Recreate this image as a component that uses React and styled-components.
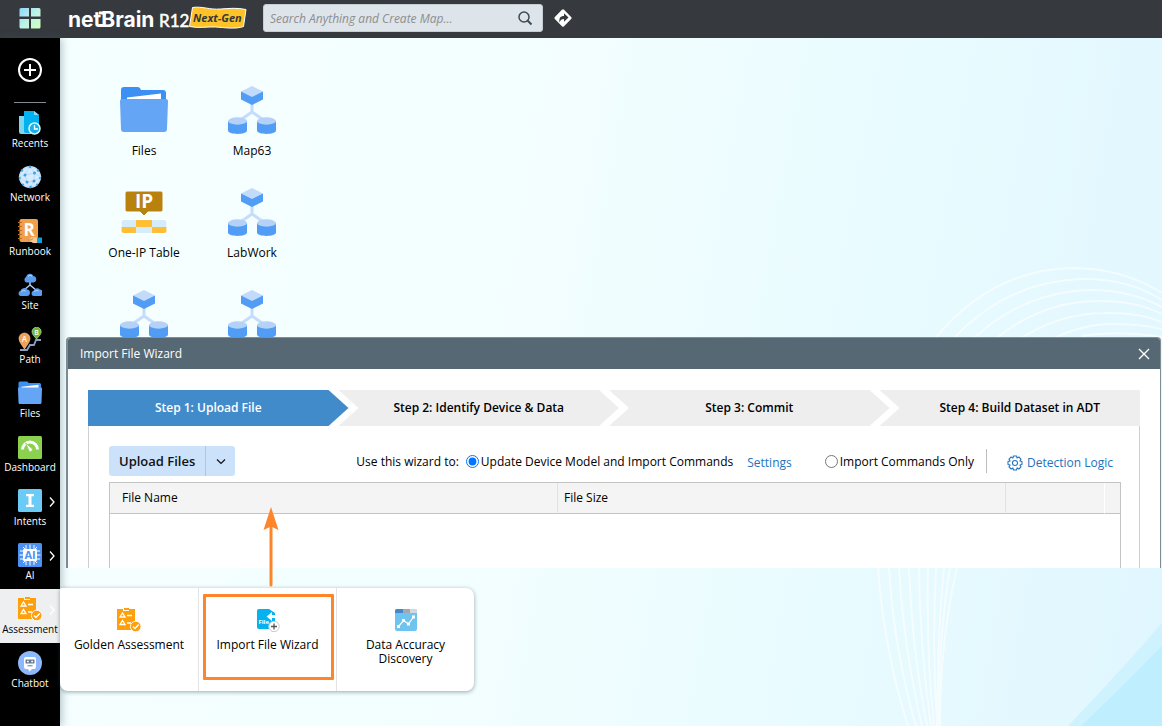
import { useState } from 'react';
import styled, { createGlobalStyle, css } from 'styled-components';

const GlobalStyle = createGlobalStyle`
  * {
    box-sizing: border-box;
  }

  body {
    margin: 0;
    font-family: 'Open Sans', 'Noto Sans', sans-serif;
    font-size: 12px;
    color: #000;
  }

  button, input {
    font-family: inherit;
    font-size: inherit;
  }
`;

const Page = styled.div`
  display: flex;
  flex-direction: column;
  min-height: 100vh;
`;

const TopBar = styled.header`
  display: flex;
  align-items: center;
  height: 38px;
  padding-bottom: 2px;
  background: #363a3f;
`;

const IconButton = styled.button`
  display: flex;
  align-items: center;
  justify-content: center;
  padding: 0;
  border: none;
  background: none;
  color: inherit;
  cursor: pointer;
`;

const AppsButton = styled(IconButton)`
  width: 60px;
`;

const Brand = styled.a`
  display: flex;
  align-items: center;
  margin: 0 16px 0 8px;
`;

const SearchBox = styled.form`
  display: flex;
  align-items: center;
  width: 280px;
  height: 28px;
  margin-right: 10px;
  border: 1px solid #c5ccd2;
  border-radius: 3px;
  background: #dde4ea;
  color: #3b4b57;
`;

const SearchInput = styled.input`
  flex: 1;
  min-width: 0;
  padding: 0 6px;
  border: none;
  outline: none;
  background: none;
  font-style: italic;

  &::placeholder {
    color: #8e8e8e;
  }
`;

const SearchButton = styled(IconButton)`
  width: 34px;
`;

const Main = styled.div`
  display: flex;
  flex: 1;
`;

const Sidebar = styled.nav`
  position: relative;
  z-index: 3;
  display: flex;
  flex-direction: column;
  flex: none;
  width: 60px;
  background: #000;
  color: #fff;
  box-shadow: 2px 0 8px rgba(60, 90, 100, 0.35);
`;

const AddButton = styled(IconButton)`
  height: 64px;
`;

const Separator = styled.hr`
  width: 32px;
  height: 1px;
  margin: 0 auto;
  border: none;
  background: #858a8e;
`;

const NavItem = styled.div`
  position: relative;
  height: 54px;
  ${(props) => props.$active && css`
    background: #eeeff1;
    color: #000;
  `}
`;

const NavButton = styled.button`
  display: flex;
  flex-direction: column;
  align-items: center;
  gap: 1px;
  width: 100%;
  height: 100%;
  padding: 8px 0 0;
  border: none;
  background: none;
  color: inherit;
  font-size: 10px;
  font-weight: 500;
  line-height: 14px;
  cursor: pointer;
`;

const NavArrow = styled.svg`
  position: absolute;
  top: 15px;
  right: 4px;
`;

const Flyout = styled.div`
  position: absolute;
  top: -1px;
  left: 60px;
  display: flex;
  border-radius: 2px 8px 8px 8px;
  background: #fff;
  color: #000;
  box-shadow: 0 1px 4px rgba(30, 60, 70, 0.45);
`;

const FlyoutCell = styled.div`
  position: relative;
  width: 138px;

  & + & {
    border-left: 1px solid #e3e3e3;
  }
`;

const FlyoutButton = styled.button`
  display: flex;
  flex-direction: column;
  align-items: center;
  gap: 6px;
  width: 100%;
  min-height: 103px;
  padding: 20px 12px 0;
  border: none;
  background: none;
  color: #000;
  line-height: 14px;
  cursor: pointer;
`;

const Highlight = styled.div`
  position: absolute;
  inset: 6px 2px 11px 4px;
  border: 3px solid #ff852b;
  border-radius: 1px;
  pointer-events: none;
`;

const HighlightArrow = styled.svg`
  position: absolute;
  bottom: 104px;
  left: 64px;
  pointer-events: none;
`;

const Desktop = styled.main`
  position: relative;
  flex: 1;
  min-width: 0;
  overflow: hidden;
  background: linear-gradient(100deg, #f5ffff 0%, #f3feff 40%, #e8fbff 72%, #e0f6fe 100%);
`;

const Backdrop = styled.svg`
  position: absolute;
  right: 0;
  bottom: 0;
  width: 302px;
  height: 476px;
`;

const Shortcuts = styled.div`
  display: grid;
  grid-template-columns: repeat(2, 108px);
  row-gap: 28px;
  padding: 48px 30px;
`;

const Shortcut = styled.button`
  display: flex;
  flex-direction: column;
  align-items: center;
  gap: 8px;
  height: 74px;
  padding: 0;
  border: none;
  background: none;
  color: #000;
  line-height: 18px;
  cursor: pointer;
`;

const Window = styled.section`
  position: absolute;
  top: 299px;
  left: 6px;
  right: 1px;
  display: flex;
  flex-direction: column;
  height: 231px;
  border: 1px solid #7d8e95;
  border-left-width: 2px;
  border-bottom: none;
  border-radius: 4px 4px 0 0;
  background: #fff;
`;

const WindowTitle = styled.header`
  display: flex;
  align-items: center;
  justify-content: space-between;
  flex: none;
  height: 31px;
  padding: 0 10px 0 12px;
  border-radius: 3px 3px 0 0;
  background: #566873;
  color: #fff;
`;

const Title = styled.h1`
  margin: 0;
  font-size: 12px;
  font-weight: 400;
`;

const WindowBody = styled.div`
  display: flex;
  flex-direction: column;
  flex: 1;
  padding: 21px 20px 0;
`;

const Steps = styled.ol`
  display: flex;
  margin: 0;
  padding: 0;
  list-style: none;
`;

const Step = styled.li`
  flex: 1 1 0;
  height: 36px;
  padding: 0 20px;
  margin-left: -10px;
  background: ${(props) => (props.$active ? '#428bca' : '#eee')};
  color: ${(props) => (props.$active ? '#fff' : '#000')};
  clip-path: polygon(0 0, calc(100% - 20px) 0, 100% 50%, calc(100% - 20px) 100%, 0 100%, 20px 50%);
  font-weight: 600;
  line-height: 36px;
  text-align: center;

  &:first-child {
    margin-left: 0;
    padding-left: 0;
    clip-path: polygon(0 0, calc(100% - 20px) 0, 100% 50%, calc(100% - 20px) 100%, 0 100%);
  }

  &:last-child {
    padding-right: 0;
    clip-path: polygon(0 0, 100% 0, 100% 100%, 0 100%, 20px 50%);
  }
`;

const Panel = styled.div`
  display: flex;
  flex-direction: column;
  gap: 6px;
  flex: 1;
  padding: 20px 18px 0 20px;
  border: solid #d0d0d0;
  border-width: 0 1px;
`;

const Toolbar = styled.div`
  display: flex;
  align-items: center;
  justify-content: space-between;
  height: 30px;
  padding-right: 8px;
`;

const SplitButton = styled.div`
  display: flex;
  height: 30px;
  border-radius: 3px;
  background: #cce2fb;
`;

const UploadButton = styled.button`
  padding: 0 10px;
  border: none;
  border-right: 1px solid #a3c9f0;
  background: none;
  font-size: 13px;
  font-weight: 600;
  color: #111;
  cursor: pointer;
`;

const DropButton = styled(IconButton)`
  width: 29px;
`;

const Options = styled.div`
  display: flex;
  align-items: center;
`;

const RadioLabel = styled.label`
  display: flex;
  align-items: center;
  gap: 2px;
  margin-left: 7px;
`;

const Radio = styled.input`
  width: 13px;
  height: 13px;
  margin: 0;
`;

const Link = styled.a`
  display: flex;
  align-items: center;
  gap: 4px;
  padding-top: 3px;
  color: #2273bd;
  text-decoration: none;
`;

const SettingsLink = styled(Link)`
  margin: 0 26px 0 14px;
`;

const DetectionLink = styled(Link)`
  height: 24px;
  margin-left: 12px;
  padding-left: 20px;
  border-left: 1px solid #bdbdbd;
`;

const FileTable = styled.table`
  width: 100%;
  border: 1px solid #c4c4c4;
  border-bottom: none;
  border-spacing: 0;
  table-layout: fixed;
`;

const Th = styled.th`
  width: ${(props) => props.$width};
  height: 31px;
  padding: 0 ${(props) => (props.$narrow ? 0 : '6px')} 2px;
  border-right: 1px solid ${(props) => props.$edge || '#e2e2e2'};
  border-bottom: 1px solid #c4c4c4;
  background: #f4f4f4;
  font-weight: 400;
  text-align: left;

  &:first-child {
    padding-left: 12px;
  }

  &:last-child {
    border-right: none;
  }
`;

const EmptyCell = styled.td`
  height: 54px;
  padding: 0;
`;

const AppsIcon = () => (
  <svg width="22" height="22" viewBox="0 0 22 22">
    <defs>
      <linearGradient id="apps" x1="0" y1="0" x2="1" y2="1">
        <stop offset="0" stopColor="#8fd6ff" />
        <stop offset="0.5" stopColor="#bdf3e6" />
        <stop offset="1" stopColor="#d5ffbd" />
      </linearGradient>
    </defs>
    <path
      fill="url(#apps)"
      d="M2 1h8v8.500H.5V2.500A1.500 1.500 0 0 1 2 1zM12 1h8a1.500 1.500 0 0 1 1.500 1.500v7H12zM.5 12H10v9.500H2A1.500 1.500 0 0 1 .5 20zM12 12h9.500v8a1.500 1.500 0 0 1-1.500 1.500h-8z"
    />
  </svg>
);

const Logo = () => (
  <svg width="179" height="32" viewBox="0 0 179 32" role="img" aria-label="NetBrain R12 Next-Gen">
    <g fill="#fff">
      <text x="0" y="25" fontSize="21" fontWeight="700" fontFamily="Inter, sans-serif">netBrain</text>
      <text x="91" y="25" fontSize="17" fontFamily="Lato, sans-serif" stroke="#fff" strokeWidth="0.500">R12</text>
    </g>
    <path d="M31 11h7M31 23.500h6" stroke="#fff" strokeWidth="3" />
    <path
      d="M124.500 5.500c10-1.500 17 2.500 28 1.500 9-.5 16-1.500 25.500.500l-2.500 17c-8 3-19 1-28 .5-8-.5-17 1.500-26-.5z"
      fill="#ffc227"
      stroke="#fff"
    />
    <text x="125" y="20" fontSize="11" fontWeight="700" fontStyle="italic" fill="#33373c">Next-Gen</text>
  </svg>
);

const SearchIcon = () => (
  <svg width="16" height="16" viewBox="0 0 16 16" fill="none" stroke="currentColor">
    <circle cx="7" cy="7" r="5" strokeWidth="1.500" />
    <path d="M10.500 10.500l4 4" strokeWidth="2" />
  </svg>
);

const DirectionIcon = () => (
  <svg width="20" height="20" viewBox="0 0 20 20">
    <rect x="3.500" y="3.500" width="13" height="13" rx="1.500" fill="#fff" transform="rotate(45 10 10)" />
    <path d="M6.500 14.500C5.800 10 7.500 8 11 8V5.200l4.500 4.300-4.500 4.300V11C8.700 11 7.300 12 6.500 14.500z" fill="#363a3f" />
  </svg>
);

const AddIcon = () => (
  <svg width="26" height="26" viewBox="0 0 26 26" fill="none" stroke="#fff" strokeWidth="2">
    <circle cx="13" cy="13" r="11" />
    <path d="M13 7v12M7 13h12" />
  </svg>
);

const RecentsIcon = () => (
  <svg width="24" height="24" viewBox="0 0 24 24">
    <path d="M1 5h12v18H3a2 2 0 0 1-2-2z" fill="#7fd4ee" />
    <path d="M6 0h10l5 4v18H8a2 2 0 0 1-2-2z" fill="#00b3f0" />
    <path d="M16 0v4h5z" fill="#8edcf7" />
    <circle cx="16.500" cy="17.500" r="5.500" fill="#1bb0e6" stroke="#e4f7ff" strokeWidth="1.500" />
    <path d="M16.500 14v4H20" fill="none" stroke="#fff" strokeWidth="1.300" />
  </svg>
);

const NetworkIcon = () => (
  <svg width="24" height="24" viewBox="0 0 24 24">
    <circle cx="12" cy="12" r="11" fill="#d6ebfd" />
    <path
      d="M4 5l8-4 8 4 3 7-3 7-8 4-8-4-3-7zM12 1L7 10l-6 2 8 5 3 6 4-7 7-4-6.500-4L12 1M7 10l9.500-2-.5 8-7 1z"
      fill="none"
      stroke="#a3cff4"
      strokeWidth="0.600"
    />
    <g fill="#3fa2e6">
      <circle cx="12" cy="2" r="1.300" /><circle cx="4" cy="5.500" r="1.200" /><circle cx="20" cy="5.500" r="1.200" />
      <circle cx="7" cy="10" r="1.500" /><circle cx="16.500" cy="8" r="1.500" /><circle cx="1.800" cy="13" r="1.100" />
      <circle cx="22" cy="13" r="1.100" /><circle cx="9" cy="17" r="1.500" /><circle cx="16" cy="16" r="1.500" />
      <circle cx="5" cy="19.500" r="1.100" /><circle cx="12.500" cy="22" r="1.300" /><circle cx="19" cy="19.500" r="1.100" />
    </g>
  </svg>
);

const RunbookIcon = () => (
  <svg width="24" height="24" viewBox="0 0 24 24">
    <rect x="1.500" y="0" width="18.500" height="23" rx="2" fill="#f0a04b" />
    <path d="M0 3.500h4M0 7.500h4M0 11.500h4M0 15.500h4M0 19.500h4" stroke="#b76d1d" strokeWidth="1.200" />
    <text x="5.500" y="17" fontSize="17" fontWeight="700" fill="#fff">R</text>
    <path d="M10 21l4-3 5 .5V24h-4z" fill="#f6c894" />
    <path d="M10 21h3l2-1.500" fill="none" stroke="#b76d1d" strokeWidth="0.700" />
    <path d="M19 18.500h5V24h-5z" fill="#0a9fe0" />
  </svg>
);

const SiteIcon = () => (
  <svg width="24" height="24" viewBox="0 0 24 24">
    <path d="M12 8v4L6 17M12 12l6 5" fill="none" stroke="#aecdf7" strokeWidth="1.500" />
    <g fill="#5b9df0">
      <path d="M8.500 9.500a3 3 0 0 1-.5-5.500 4 4 0 0 1 7.500-1 3.300 3.300 0 0 1 0 6.500z" />
      <path d="M2.500 23a2.700 2.700 0 0 1 0-5.200 3.700 3.700 0 0 1 6.500-1.200A3.200 3.200 0 0 1 8.500 23z" />
      <path d="M15.500 23a2.700 2.700 0 0 1 0-5.200 3.700 3.700 0 0 1 6.300-1.200 3.200 3.200 0 0 1-.5 6.400z" />
    </g>
    <path d="M10 3.500q1.500-2 4-.5M3.500 18.500q1.500-2 4-.5M16.500 18.500q1.500-2 4-.5" fill="none" stroke="#bfdcff" />
  </svg>
);

const PathIcon = () => (
  <svg width="24" height="24" viewBox="0 0 24 24">
    <path d="M2 23h7l3-5h4l2-5h5" fill="none" stroke="#8b9fc3" strokeWidth="1.800" />
    <path d="M6.500 22C4 18 1 15 1 11.500a5.500 5.500 0 0 1 11 0C12 15 9 18 6.500 22z" fill="#efa257" stroke="#f6d3ae" strokeWidth="0.600" />
    <path d="M18.500 12C16.500 9.500 14 7.500 14 4.800a4.500 4.500 0 0 1 9.200 0C23.200 7.500 20.500 9.500 18.500 12z" fill="#68b82e" stroke="#d3efbd" strokeWidth="0.600" />
    <text x="6.500" y="14.500" fontSize="8" fontWeight="600" fill="#fff" textAnchor="middle">A</text>
    <text x="18.600" y="7.500" fontSize="7" fontWeight="600" fill="#fff" textAnchor="middle">B</text>
  </svg>
);

const FolderIcon = ({ size }) => (
  <svg width={size} height={size} viewBox="0 0 48 48">
    <path d="M1 14V4a3 3 0 0 1 3-3h14q2 0 3 3h22a3 3 0 0 1 3 3v12H1z" fill="#3c90f4" />
    <path d="M7 11.500L41 7.500V18H7z" fill="#fff" />
    <path d="M0 15a2 2 0 0 1 2-2h44a2 2 0 0 1 2 2l-1 28a3 3 0 0 1-3 3H4a3 3 0 0 1-3-3z" fill="#64a6f5" />
  </svg>
);

const DashboardIcon = () => (
  <svg width="24" height="24" viewBox="0 0 24 24">
    <rect y="1" width="24" height="23" rx="1.500" fill="#8cd04f" />
    <path d="M4.500 14.500a7.500 7.500 0 0 1 15 0" fill="none" stroke="#fff" strokeWidth="3" />
    <path d="M7.500 8l6.500 5.500a2 2 0 0 1-2.800 2.800z" fill="#fff" stroke="#8cd04f" strokeWidth="0.800" />
  </svg>
);

const IntentsIcon = () => (
  <svg width="24" height="24" viewBox="0 0 24 24">
    <rect y="0" width="24" height="23" rx="1.500" fill="#69cbf6" />
    <path d="M8 5h8v2.300h-2.500v8.400H16V18H8v-2.300h2.500V7.300H8z" fill="#fff" />
  </svg>
);

const AiIcon = () => (
  <svg width="24" height="24" viewBox="0 0 24 24">
    <rect width="24" height="24" rx="1.500" fill="#4b92f3" />
    <path
      d="M8 2v5M12 1.500V7M16 2v5M8 17v5M12 17v5.500M16 17v5M2 8h5M1.500 12H7M2 16h5M17 8h5M17 12h5.500M17 16h5M5 4l3 3M19 4l-3 3M5 20l3-3M19 20l-3-3"
      stroke="#fff"
    />
    <rect x="5" y="6" width="14" height="12" rx="1" fill="#fff" />
    <text x="12" y="16" fontSize="11" fontWeight="700" fill="#4b92f3" textAnchor="middle">AI</text>
  </svg>
);

const AssessmentIcon = () => (
  <svg width="24" height="24" viewBox="0 0 24 24">
    <path d="M0 1h6v2h6V1h6v21H0z" fill="#ff9f0a" />
    <path d="M7 0h5v2H7z" fill="#ff9f0a" />
    <path d="M3 9l2.500-4L8 9zM3 16.500l2.500-4L8 16.500zM10 7.500h5M10 15h4" fill="none" stroke="#fff" strokeWidth="1.300" />
    <circle cx="18.700" cy="18.500" r="5.300" fill="#ff9f0a" stroke="#fff" strokeWidth="0.900" />
    <path d="M16 18.500l2 2 3.700-4" fill="none" stroke="#fff" strokeWidth="1.400" />
  </svg>
);

const ChatbotIcon = () => (
  <svg width="24" height="24" viewBox="0 0 24 24">
    <circle cx="12" cy="12" r="12" fill="#8db8fb" />
    <path d="M8 6h8a2 2 0 0 1 2 2v8a2 2 0 0 1-2 2h-2l-2.500 2.500L10 18H8a2 2 0 0 1-2-2V8a2 2 0 0 1 2-2z" fill="#fff" />
    <path d="M7.500 8.500h9v4h-9z" fill="#667b98" />
    <path d="M9 10.500h1.800M13.300 10.500H15" stroke="#fff" strokeWidth="1.600" />
    <path d="M9.500 14.800h5" stroke="#667b98" />
  </svg>
);

const MapIcon = () => (
  <svg width="48" height="48" viewBox="0 0 48 48">
    <path d="M24 17v9L11 35M24 26l13 9" fill="none" stroke="#c5dcfb" strokeWidth="3" />
    <path d="M13 5.500v8L24 19l11-5.500v-8z" fill="#519df5" />
    <path d="M24 0l11 5.500L24 11 13 5.500z" fill="#c3dbfa" />
    <path d="M0 35v9.500c0 4.500 19 4.500 19 0V35zM29 35v9.500c0 4.500 19 4.500 19 0V35z" fill="#519df5" />
    <ellipse cx="9.500" cy="35" rx="9.500" ry="3.700" fill="#b4d2f7" />
    <ellipse cx="38.500" cy="35" rx="9.500" ry="3.700" fill="#b4d2f7" />
  </svg>
);

const IpTableIcon = () => (
  <svg width="48" height="48" viewBox="0 0 48 48">
    <path d="M7 3h34a2 2 0 0 1 2 2v17a2 2 0 0 1-2 2H28l-4 4-4-4H7a2 2 0 0 1-2-2V5a2 2 0 0 1 2-2z" fill="#b9810d" stroke="#fff" strokeWidth="1" />
    <text x="24" y="20" fontSize="19" fontWeight="700" fill="#fff" textAnchor="middle">IP</text>
    <rect x="0.500" y="31" width="47" height="15" rx="3" fill="#fff" />
    <path d="M4 32h12v7H1.500v-4.500A2.500 2.500 0 0 1 4 32zM32 32h12a2.500 2.500 0 0 1 2.500 2.500V39H32zM16 39h16v6H16z" fill="#d5ecfb" />
    <path d="M16 32h16v7H16zM1.500 39H16v6H4a2.500 2.500 0 0 1-2.500-2.500zM32 39h14.500v3.500A2.500 2.500 0 0 1 44 45H32z" fill="#ffbe38" />
  </svg>
);

const ImportIcon = () => (
  <svg width="24" height="24" viewBox="0 0 24 24">
    <path d="M3 1h10l6 4v16H3a2 2 0 0 1-2-2V3a2 2 0 0 1 2-2z" fill="#04b2f0" />
    <path d="M10.500 8.500l5.500-4.500v3h4v3h-4v3z" fill="#fff" />
    <text x="2.500" y="16" fontSize="6" fontWeight="700" fill="#fff">File</text>
    <circle cx="18" cy="18.500" r="5.200" fill="#fff" stroke="#c9c9c9" />
    <path d="M18 15.500v6M15 18.500h6" stroke="#555" strokeWidth="1.300" />
  </svg>
);

const DiscoveryIcon = () => (
  <svg width="24" height="24" viewBox="0 0 24 24">
    <rect x="1" y="1" width="22" height="22" rx="2" fill="#6fc4ef" />
    <path d="M3 1h6v4H1V3a2 2 0 0 1 2-2z" fill="#4388cd" />
    <path d="M9 1h7v4H9z" fill="#a2a8ad" />
    <path d="M16 1h5a2 2 0 0 1 2 2v2h-7z" fill="#d2d8dc" />
    <path d="M4.500 18.500l5-6 5 3.500 5-7" fill="none" stroke="#fff" strokeWidth="1.200" />
    <path d="M3 17h3v3H3zM8 11h3v3H8zM13 14.500h3v3h-3zM18 7.500h3v3h-3z" fill="#fff" />
  </svg>
);

const ChevronDown = () => (
  <svg width="12" height="12" viewBox="0 0 12 12" fill="none" stroke="#111" strokeWidth="1.200">
    <path d="M2 4.500l4 4 4-4" />
  </svg>
);

const CloseIcon = () => (
  <svg width="12" height="12" viewBox="0 0 12 12" fill="none" stroke="#fff" strokeWidth="1.400">
    <path d="M1 1l10 10M11 1L1 11" />
  </svg>
);

const GearIcon = () => (
  <svg width="16" height="16" viewBox="0 0 24 24" fill="none" stroke="currentColor" strokeWidth="1.600" strokeLinejoin="round">
    <path d="M9.700 1.500h4.600l.8 3.100 2.700-1.600 3.200 3.200-1.600 2.700 3.100.8v4.600l-3.100.8 1.600 2.700-3.200 3.200-2.700-1.600-.8 3.100H9.700l-.8-3.100L6.200 21 3 17.800l1.600-2.700-3.100-.8V9.700l3.100-.8L3 6.200 6.200 3l2.700 1.600z" />
    <circle cx="12" cy="12" r="3.800" />
  </svg>
);

const DesktopBackdrop = () => (
  <Backdrop viewBox="0 0 302 476" aria-hidden="true">
    <path d="M302 373Q264 417 208 476H302z" fill="#cff3fe" />
    <path d="M302 396Q262 437 221 476H302z" fill="#bfeeff" />
    <g fill="none" stroke="#fff" strokeWidth="2" opacity="0.600">
      <path d="M74 90Q130 20 212 18Q262 18 302 43" />
      <path d="M92 90Q146 32 220 29Q268 28 302 50" />
      <path d="M112 90Q162 42 230 40Q270 40 302 57" />
      <path d="M134 90Q180 52 236 51Q274 50 302 64" />
      <path d="M158 90Q200 63 244 63Q278 62 302 72" />
      <path d="M190 90Q222 74 252 74Q280 74 302 79" />
      <path d="M222 86Q256 80 302 87" />
      <path d="M18 318Q24 400 48 476M29 318Q34 400 56 476M39 318Q44 400 62 476M49 318Q52 400 67 476M59 318Q60 400 71 476" />
      <path d="M68 318Q66 400 74 476M76 318Q72 400 77 476M84 318Q76 400 78 476M90 318Q78 390 79 476M97 318Q80 390 80 476" />
    </g>
  </Backdrop>
);

const navItems = [
  { label: 'Recents', icon: <RecentsIcon /> },
  { label: 'Network', icon: <NetworkIcon /> },
  { label: 'Runbook', icon: <RunbookIcon /> },
  { label: 'Site', icon: <SiteIcon /> },
  { label: 'Path', icon: <PathIcon /> },
  { label: 'Files', icon: <FolderIcon size={24} /> },
  { label: 'Dashboard', icon: <DashboardIcon /> },
  { label: 'Intents', icon: <IntentsIcon />, arrow: true },
  { label: 'AI', icon: <AiIcon />, arrow: true },
  { label: 'Assessment', icon: <AssessmentIcon />, arrow: true, active: true },
  { label: 'Chatbot', icon: <ChatbotIcon /> },
];

const assessmentTools = [
  { label: 'Golden Assessment', icon: <AssessmentIcon /> },
  { label: 'Import File Wizard', icon: <ImportIcon />, highlighted: true },
  { label: 'Data Accuracy Discovery', icon: <DiscoveryIcon /> },
];

const shortcuts = [
  { id: 1, label: 'Files', icon: <FolderIcon size={48} /> },
  { id: 2, label: 'Map63', icon: <MapIcon /> },
  { id: 3, label: 'One-IP Table', icon: <IpTableIcon /> },
  { id: 4, label: 'LabWork', icon: <MapIcon /> },
  { id: 5, icon: <MapIcon /> },
  { id: 6, icon: <MapIcon /> },
];

const steps = [
  'Step 1: Upload File',
  'Step 2: Identify Device & Data',
  'Step 3: Commit',
  'Step 4: Build Dataset in ADT',
];

function AssessmentMenu() {
  return (
    <Flyout>
      {assessmentTools.map((tool) => (
        <FlyoutCell key={tool.label}>
          <FlyoutButton type="button">
            {tool.icon}
            {tool.label}
          </FlyoutButton>
          {tool.highlighted && (
            <>
              <Highlight />
              <HighlightArrow width="16" height="80" viewBox="0 0 16 80">
                <path d="M8 78V20" stroke="#ff852b" strokeWidth="3" strokeLinecap="round" />
                <path d="M8 0l7.500 23L8 19.500.5 23z" fill="#ff852b" />
              </HighlightArrow>
            </>
          )}
        </FlyoutCell>
      ))}
    </Flyout>
  );
}

function ImportWizard() {
  const [mode, setMode] = useState('update');

  return (
    <Window>
      <WindowTitle>
        <Title>Import File Wizard</Title>
        <IconButton type="button" aria-label="Close"><CloseIcon /></IconButton>
      </WindowTitle>
      <WindowBody>
        <Steps>
          {steps.map((step, index) => (
            <Step key={step} $active={index === 0}>{step}</Step>
          ))}
        </Steps>
        <Panel>
          <Toolbar>
            <SplitButton>
              <UploadButton type="button">Upload Files</UploadButton>
              <DropButton type="button" aria-label="More upload options"><ChevronDown /></DropButton>
            </SplitButton>
            <Options>
              <span>Use this wizard to:</span>
              <RadioLabel>
                <Radio type="radio" name="mode" checked={mode === 'update'} onChange={() => setMode('update')} />
                Update Device Model and Import Commands
              </RadioLabel>
              <SettingsLink href="#settings">Settings</SettingsLink>
              <RadioLabel>
                <Radio type="radio" name="mode" checked={mode === 'import'} onChange={() => setMode('import')} />
                Import Commands Only
              </RadioLabel>
              <DetectionLink href="#detection">
                <GearIcon />
                Detection Logic
              </DetectionLink>
            </Options>
          </Toolbar>
          <FileTable>
            <thead>
              <tr>
                <Th $width="auto">File Name</Th>
                <Th $width="auto">File Size</Th>
                <Th $width="99px" $edge="#fff" aria-label="Status" />
                <Th $width="15px" $narrow aria-label="Actions" />
              </tr>
            </thead>
            <tbody>
              <tr><EmptyCell colSpan={4} /></tr>
            </tbody>
          </FileTable>
        </Panel>
      </WindowBody>
    </Window>
  );
}

function App() {
  return (
    <Page>
      <GlobalStyle />
      <TopBar>
        <AppsButton type="button" aria-label="Apps"><AppsIcon /></AppsButton>
        <Brand href="#home"><Logo /></Brand>
        <SearchBox onSubmit={(e) => e.preventDefault()}>
          <SearchInput type="text" aria-label="Search" placeholder="Search Anything and Create Map..." />
          <SearchButton type="submit" aria-label="Run search"><SearchIcon /></SearchButton>
        </SearchBox>
        <IconButton type="button" aria-label="Directions"><DirectionIcon /></IconButton>
      </TopBar>
      <Main>
        <Sidebar>
          <AddButton type="button" aria-label="Add"><AddIcon /></AddButton>
          <Separator />
          {navItems.map((item) => (
            <NavItem key={item.label} $active={item.active}>
              <NavButton type="button">
                {item.icon}
                {item.label}
              </NavButton>
              {item.arrow && (
                <NavArrow width="8" height="12" viewBox="0 0 8 12" fill="none" stroke="#fff" strokeWidth="1.300">
                  <path d="M2 1.500L6 6l-4 4.500" />
                </NavArrow>
              )}
              {item.active && <AssessmentMenu />}
            </NavItem>
          ))}
        </Sidebar>
        <Desktop>
          <DesktopBackdrop />
          <Shortcuts>
            {shortcuts.map((item) => (
              <Shortcut key={item.id} type="button" aria-label={item.label || 'Map'}>
                {item.icon}
                {item.label}
              </Shortcut>
            ))}
          </Shortcuts>
          <ImportWizard />
        </Desktop>
      </Main>
    </Page>
  );
}

export default App;
